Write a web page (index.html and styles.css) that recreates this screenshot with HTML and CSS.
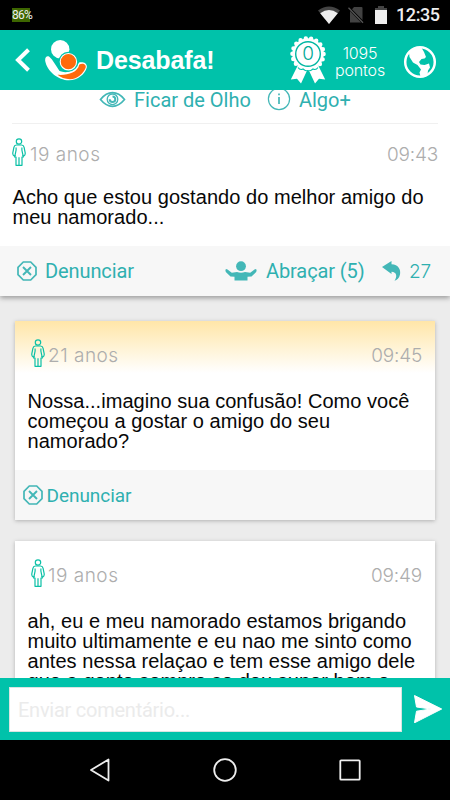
FILE: index.html
```html
<!DOCTYPE html>
<html lang="pt-BR">
<head>
<meta charset="utf-8">
<title>Desabafa!</title>
<link rel="stylesheet" href="styles.css">
</head>
<body>
<svg class="defs" width="0" height="0" aria-hidden="true">
  <symbol id="woman" viewBox="0 0 14 28">
    <g fill="none" stroke="#0bc0a6" stroke-width="1.2" stroke-linejoin="round">
      <circle cx="7" cy="3.500" r="2.700"/>
      <path d="M4.300 7h5.400c1.500 0 2.100.9 2.400 2.300l1.100 5.600c.1 1-.3 2.500-1.400 3.100l-1.400-.5M4.300 7c-1.500 0-2.100.9-2.400 2.300L.8 14.900c-.1 1 .3 2.500 1.400 3.100l1.400-.5"/>
      <path d="M4.100 9.500c.5 2.500-.5 4.500-1.500 9.500H4v8.300h6V19h1.400c-1-5-2-7-1.500-9.500M7 19.300v8"/>
    </g>
  </symbol>
  <symbol id="report" viewBox="0 0 20 20">
    <g fill="none" stroke="#43b7b7" stroke-width="1.700">
      <path d="M6.300 1h7.400L19 6.300v7.400L13.700 19H6.300L1 13.700V6.300z"/>
      <path d="M6 6l8 8M14 6l-8 8" stroke-width="1.900"/>
    </g>
  </symbol>
</svg>

<div class="screen">
  <div class="status">
    <span class="battery-pct">86%</span>
    <svg class="wifi" width="24" height="18" viewBox="0 0 24 18"><path d="M1 4.500Q12-3.500 23 4.500L12 18z" fill="#444"/><path d="M3.200 7.200Q12 1 20.800 7.200L12 18z" fill="#eee"/></svg>
    <svg class="sim" width="18" height="18" viewBox="0 0 18 18"><path d="M7 1h7.500q1 0 1 1v12L5 3.200zM3 5l11 11.500H3z" fill="#424242"/><path d="M1.500 1.800l14.500 15" stroke="#555" stroke-width="1.300"/></svg>
    <svg class="batt" width="14" height="18" viewBox="0 0 14 18"><path d="M4 0h6v2h3v3H1V2h3z" fill="#444"/><path d="M1 4h12v14H1z" fill="#eee"/></svg>
    <span class="clock">12:35</span>
  </div>

  <header class="bar">
    <svg class="back" width="16" height="24" viewBox="0 0 16 24"><path d="M13.500 1.700L3 12l10.500 10.300" fill="none" stroke="#fff" stroke-width="4"/></svg>
    <svg class="logo" width="43" height="41" viewBox="0 0 43 41">
      <circle cx="15.200" cy="9.300" r="9.200" fill="#fff"/>
      <path d="M4.300 16.800C8 20 11 26 14.500 31C22 34 30 31 34 22.500C38 21.500 42.500 23 41.800 27.500C40 34 33 40.300 24 40.300C13 40.300 2 31 .2 21C-.2 17 2 15.500 4.300 16.800z" fill="#fff"/>
      <path d="M12.500 34.800C22 35.500 32.500 33 34.300 24.500C38 22.500 41.500 24.500 40.700 27.500C38.500 33.500 32.500 39 25 39.200C20 39.200 15.500 37.500 12.500 34.800z" fill="#ff6a0b"/>
      <circle cx="23.400" cy="21.700" r="10" fill="#00c2aa"/>
      <circle cx="23.400" cy="21.700" r="8.200" fill="#ff6a0b" stroke="#fff" stroke-width="1.100"/>
    </svg>
    <h1 class="title"><span>Desabafa!</span></h1>
    <div class="medal">
      <svg width="36" height="48" viewBox="0 0 36 48">
        <path d="M7.500 30L.8 43.500l6.200-.8L11 47.500 17.300 34h1.400L25 47.500l4-4.800 6.200.8L28.500 30z" fill="#fff"/>
        <circle cx="18" cy="18" r="15.700" fill="#fff"/>
        <circle cx="18" cy="18" r="15.600" fill="none" stroke="#fff" stroke-width="4.400" stroke-linecap="round" stroke-dasharray="0 5.445"/>
        <path d="M8 31.500q2 3 5 1.500 2 2 5 2t5-2q3 1.500 5-1.500" fill="none" stroke="#00c2aa" stroke-width="1.100"/>
        <circle cx="18" cy="18" r="12.300" fill="none" stroke="#00b7a2" stroke-width="1.400"/>
      </svg>
      <span class="medal-num">0</span>
    </div>
    <div class="points"><span>1095</span><span>pontos</span></div>
    <svg class="globe" width="34" height="34" viewBox="0 0 34 34"><circle cx="17" cy="17" r="14.800" fill="none" stroke="#fff" stroke-width="2.500"/><path d="M6 7.500L11 3l7.500-.3 2.500 4.300 2 5-1.500 1.500-3 .5-2.500 3 1.500 2.500 4 .5 4.500-1.500 1 4-2 3-.5 4.500-3.500 2-3.500-.5-1-4 1.500-3-3.500-4.500-4.500-2.500L6.500 12z" fill="#fff"/></svg>
  </header>

  <main class="feed">
    <section class="post">
      <div class="links">
        <svg class="eye" width="27" height="17" viewBox="0 0 27 17"><g fill="none" stroke="#43b7b7" stroke-width="1.700"><path d="M1.500 8.500Q7 1.700 13.500 1.700T25.500 8.500Q20 15.300 13.500 15.300T1.500 8.500z"/><circle cx="13.500" cy="8.300" r="5.300" stroke-width="1.300"/><path d="M13.500 5.500a2.800 2.800 0 1 1-2.800 2.800" stroke-width="2"/></g></svg>
        <span class="lk watch">Ficar de Olho</span>
        <svg class="info" width="24" height="24" viewBox="0 0 24 24"><circle cx="12" cy="12" r="10.600" fill="none" stroke="#43b7b7" stroke-width="1.200"/><path d="M12 10v7M12 6.500v1.700" stroke="#43b7b7" stroke-width="1.700"/></svg>
        <span class="lk more">Algo+</span>
      </div>
      <div class="head">
        <svg class="woman" width="14" height="28"><use href="#woman"/></svg>
        <span class="age">19 anos</span><time>09:43</time>
      </div>
      <p class="msg">Acho que estou gostando do melhor amigo do<br>meu namorado...</p>
      <div class="foot">
        <svg class="report" width="20" height="20"><use href="#report"/></svg>
        <span class="lk den">Denunciar</span>
        <svg class="hug" width="32" height="20" viewBox="0 0 32 20"><circle cx="16" cy="5.200" r="4.900" fill="#43b7b7"/><path d="M.3 8.800l1.500-.8 5 3.700 5.200-.7q4 1.500 8 0l5.200.7 5-3.700 1.500.8-.5 2.200-4.700 4.500-4 .3v3.700H9.500v-3.700l-4-.3L.8 11z" fill="#43b7b7"/></svg>
        <span class="lk abr">Abraçar (5)</span>
        <svg class="reply" width="19" height="20" viewBox="0 0 19 20"><path d="M0 6L9.500 0v3.200c7 .3 9.500 5.300 8.500 10.300-.7 3.500-3 5.800-5.500 6.200 3-4 2.300-8.700-3-8.900V13z" fill="#43b7b7"/></svg>
        <span class="count">27</span>
      </div>
    </section>

    <article class="card gold">
      <div class="head">
        <svg class="woman" width="14" height="28"><use href="#woman"/></svg>
        <span class="age">21 anos</span><time>09:45</time>
      </div>
      <p class="msg">Nossa...imagino sua confusão! Como você<br>começou a gostar o amigo do seu<br>namorado?</p>
      <div class="foot">
        <svg class="report" width="20" height="20"><use href="#report"/></svg>
        <span class="lk den">Denunciar</span>
      </div>
    </article>

    <article class="card">
      <div class="head">
        <svg class="woman" width="14" height="28"><use href="#woman"/></svg>
        <span class="age">19 anos</span><time>09:49</time>
      </div>
      <p class="msg">ah, eu e meu namorado estamos brigando<br>muito ultimamente e eu nao me sinto como<br>antes nessa relaçao e tem esse amigo dele<br>que a gente sempre se deu super bem e</p>
    </article>
  </main>

  <div class="composer">
    <div class="field"><span>Enviar comentário...</span></div>
    <svg class="send" width="28" height="28" viewBox="0 0 28 28"><path d="M.5.500L27.700 14 .5 27.800 2.500 16.200 17 14 2.500 12z" fill="#fff" stroke="#fff" stroke-linejoin="round"/></svg>
  </div>

  <nav class="nav">
    <svg width="26" height="26" viewBox="0 0 26 26"><path d="M21.500 2.500v21L4 13z" fill="none" stroke="#eee" stroke-width="1.800" stroke-linejoin="round"/></svg>
    <svg width="26" height="26" viewBox="0 0 26 26"><circle cx="13" cy="13" r="10.800" fill="none" stroke="#eee" stroke-width="1.800"/></svg>
    <svg width="26" height="26" viewBox="0 0 26 26"><rect x="3.300" y="3.300" width="19.400" height="19.400" rx=".8" fill="none" stroke="#eee" stroke-width="1.800"/></svg>
  </nav>
</div>
</body>
</html>
```

FILE: styles.css
```css
* { box-sizing: border-box; }
body { margin: 0; background: #ececec; font-family: "Liberation Sans", Arial, sans-serif; }
svg { display: block; flex: none; }
.defs { position: absolute; }
span, time, .msg { white-space: nowrap; }
.screen { width: 450px; height: 800px; display: flex; flex-direction: column; overflow: hidden; }

.status { height: 30px; flex: none; background: #000; display: flex; align-items: center; padding: 0 10px 0 12px; color: #eee; }
.battery-pct { width: 21px; height: 14px; font: 400 12px/14px Roboto, sans-serif; letter-spacing: -.7px; background: linear-gradient(90deg, #3d6600 18px, transparent 18px); margin-right: auto; }
.wifi { margin-right: 6px; }
.sim { margin-right: 9px; }
.batt { margin-right: 8px; }
.clock { font: 500 18px/30px Roboto, sans-serif; width: 44px; letter-spacing: -.4px; }

.bar { height: 60px; flex: none; background: #00c2aa; color: #fff; display: flex; align-items: center; padding-left: 15px; }
.logo { margin-left: 14px; }
.title { margin: 0 0 0 8px; font-size: 25px; line-height: 60px; width: 194px; letter-spacing: -.1px; }
.medal { position: relative; width: 36px; height: 48px; }
.medal-num { position: absolute; left: 0; top: 8px; width: 36px; text-align: center; font: 300 19px/20px Inter, sans-serif; color: #00a995; }
.points { width: 52px; margin: 3px 0 0 8px; display: flex; flex-direction: column; align-items: center; font: 300 16px/17px Inter, sans-serif; letter-spacing: -.15px; }
.globe { margin: 3px 0 0 17px; }

.feed { height: 588px; flex: none; overflow: hidden; background: #ececec; }
.post { background: #fff; height: 206px; box-shadow: 0 2px 5px rgba(0,0,0,.35); }
.links { height: 34px; margin: 0 12px; border-bottom: 1px solid #f0f0f0; display: flex; align-items: flex-start; padding-left: 87px; }
.lk { color: #2fb0b0; font: 400 20px/24px Roboto, sans-serif; }
.eye { margin-top: 1px; }
.watch { margin: -2px 0 0 8px; }
.info { margin: -3px 0 0 16px; }
.more { margin: -2px 0 0 8px; }
.head { display: flex; align-items: center; color: #adadad; font: 300 19px/28px Inter, sans-serif; height: 28px; }
.head time { margin-left: auto; letter-spacing: -.2px; padding-top: 5px; }
.age { letter-spacing: .5px; padding-top: 5px; }
.post .head { margin: 14px 12px 0; }
.post .age { margin-left: 4px; }
.msg { margin: 0; font-size: 20px; line-height: 20px; letter-spacing: .045px; color: #080808; }
.post .msg { padding: 21px 12px 0 12.500px; height: 80px; }
.foot { height: 50px; background: #f7f7f7; display: flex; align-items: center; }
.post .foot { padding-left: 17px; }
.post .den { margin-left: 8px; width: 89px; letter-spacing: -.1px; }
.hug { margin-left: 91px; }
.abr { margin-left: 9px; width: 99px; letter-spacing: -.1px; }
.reply { margin-left: 17px; }
.count { margin-left: 8px; padding-top: 2px; color: #2fb0b0; font: 300 19px/24px Inter, sans-serif; letter-spacing: -.2px; }

.card { margin: 25px 15px 0; height: 199px; background: #fff; box-shadow: 0 1px 4px rgba(0,0,0,.25); }
.card + .card { margin-top: 21px; }
.gold { background: linear-gradient(#ffe6a8, #fff 52px); }
.card .head { padding: 0 13px 0 16px; height: 65px; }
.card .woman { margin-top: -2px; }
.card .age { margin-left: 3px; padding-top: 4px; }
.card .head time { padding-top: 4px; }
.card .msg { padding: 5px 12px 0 12.500px; height: 84px; }
.card .foot { padding-left: 8px; }
.card .den { margin: 1px 0 0 3.500px; font-size: 19px; letter-spacing: -.05px; }

.composer { height: 62px; flex: none; background: #00c2aa; display: flex; align-items: center; padding-left: 9px; }
.field { width: 393px; height: 45px; background: #fff; border: 1px solid #d8e4e2; padding-left: 8px; font: 400 20px/45px Roboto, sans-serif; letter-spacing: -.25px; color: #ebebeb; }
.send { margin-left: 12px; }
.nav { height: 60px; flex: none; background: #000; display: flex; align-items: center; justify-content: center; gap: 99px; }
```
